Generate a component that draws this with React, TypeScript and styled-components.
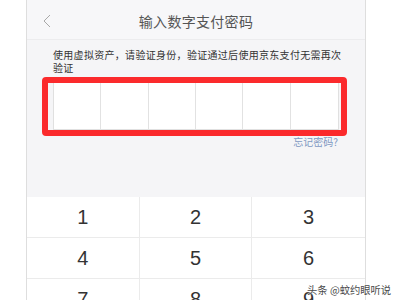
import React from "react";
import styled, { createGlobalStyle } from "styled-components";

const GlobalStyle = createGlobalStyle`
  html, body {
    margin: 0;
    padding: 0;
    background: #ffffff;
    overflow: hidden;
  }
  body {
    font-family: "Noto Sans CJK SC", "Noto Sans", sans-serif;
  }
`;

const Frame = styled.div`
  position: relative;
  width: 400px;
  height: 300px;
  overflow: hidden;
  background: #ffffff;
`;

const Phone = styled.div`
  margin-left: 26px;
  width: 338px;
  height: 320px;
  border-left: 1px solid #dedede;
  border-right: 1px solid #dedede;
  display: flex;
  flex-direction: column;
  background: #f5f5f7;
`;

const Header = styled.div`
  height: 40px;
  box-sizing: border-box;
  border-bottom: 1px solid #ececee;
  background: #f7f7f9;
  display: flex;
  align-items: center;
  justify-content: center;
  position: relative;
`;

const BackButton = styled.div`
  position: absolute;
  left: 15px;
  top: 14px;
  width: 10px;
  height: 14px;
  display: flex;
`;

const Title = styled.div`
  font-size: 14px;
  letter-spacing: 0.3px;
  color: #555;
  margin-top: 2px;
`;

const Content = styled.div`
  height: 157px;
  box-sizing: border-box;
  padding: 8px 26px 0 26px;
  display: flex;
  flex-direction: column;
`;

const Hint = styled.div`
  font-size: 10px;
  line-height: 13px;
  letter-spacing: 0.3px;
  color: #333;
  width: 290px;
`;

const PinWrap = styled.div`
  position: relative;
  margin-top: 8px;
  width: 286px;
`;

const PinBox = styled.div`
  display: grid;
  grid-template-columns: repeat(6, 1fr);
  height: 48px;
  background: #fff;
  border: 1px solid #e0e0e0;
  box-sizing: border-box;
`;

const PinCell = styled.div<{ $last?: boolean }>`
  border-right: ${(p) => (p.$last ? "none" : "1px solid #e2e2e2")};
`;

const Marker = styled.div`
  position: absolute;
  left: -11px;
  top: -5px;
  right: -8px;
  bottom: -6px;
  border: 6px solid #fb2a2c;
  border-radius: 4px;
  pointer-events: none;
`;

const Forgot = styled.div`
  align-self: flex-end;
  margin-top: 5px;
  margin-right: 1px;
  font-size: 10px;
  line-height: 14px;
  color: #7d98c2;
`;

const Keypad = styled.div`
  display: grid;
  grid-template-columns: repeat(3, 1fr);
  background: #fff;
`;

const Key = styled.div<{ $col: number }>`
  height: 41px;
  box-sizing: border-box;
  border-bottom: 1px solid #ebebeb;
  border-right: ${(p) => (p.$col < 2 ? "1px solid #ebebeb" : "none")};
  display: flex;
  align-items: center;
  justify-content: center;
  font-family: "Liberation Sans", Arial, sans-serif;
  font-size: 20px;
  color: #333;
`;

const Watermark = styled.div`
  position: absolute;
  left: 307px;
  top: 283px;
  font-size: 10.3px;
  line-height: 14px;
  color: #4a4a4a;
  text-shadow: 0 0 2px #fff, 0 0 2px #fff;
  white-space: nowrap;
`;

const keys = ["1", "2", "3", "4", "5", "6", "7", "8", "9"];

const App = () => (
  <>
    <GlobalStyle />
    <Frame>
      <Phone>
        <Header>
          <BackButton>
            <svg width="10" height="14" viewBox="0 0 10 14">
              <polyline
                points="8,1 2,7 8,13"
                fill="none"
                stroke="#a8a8a8"
                strokeWidth="1"
              />
            </svg>
          </BackButton>
          <Title>输入数字支付密码</Title>
        </Header>
        <Content>
          <Hint>使用虚拟资产，请验证身份，验证通过后使用京东支付无需再次验证</Hint>
          <PinWrap>
            <PinBox>
              {[0, 1, 2, 3, 4, 5].map((i) => (
                <PinCell key={i} $last={i === 5} />
              ))}
            </PinBox>
            <Marker />
          </PinWrap>
          <Forgot>忘记密码?</Forgot>
        </Content>
        <Keypad>
          {keys.map((k, i) => (
            <Key key={k} $col={i % 3}>
              {k}
            </Key>
          ))}
        </Keypad>
      </Phone>
      <Watermark>头条 @蚊约眼听说</Watermark>
    </Frame>
  </>
);

export default App;
